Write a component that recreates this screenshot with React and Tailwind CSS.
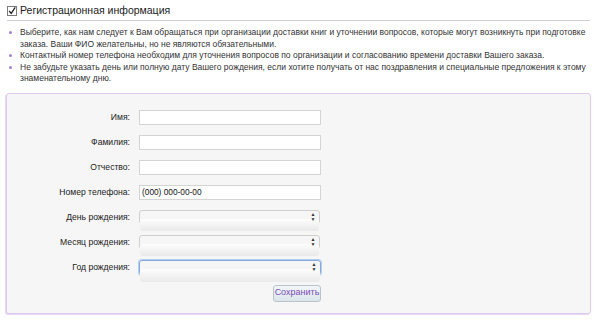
import { useState } from "react";

const notes = [
    "Выберите, как нам следует к Вам обращаться при организации доставки книг и уточнении вопросов, которые могут возникнуть при подготовке заказа. Ваши ФИО желательны, но не являются обязательными.",
    "Контактный номер телефона необходим для уточнения вопросов по организации и согласованию времени доставки Вашего заказа.",
    "Не забудьте указать день или полную дату Вашего рождения, если хотите получать от нас поздравления и специальные предложения к этому знаменательному дню.",
];

function TextField({ label, value }) {
    return (
        <>
            <label className="text-right text-[8.6px] text-[#222] leading-[15px]">{label}</label>
            <input
                className="h-[15px] w-[182px] border border-[#d4d4d4] bg-white px-[2px] text-[8.3px] text-[#111] outline-none"
                defaultValue={value}
            />
        </>
    );
}

function SelectField({ label, focused }) {
    return (
        <>
            <label className="text-right text-[8.6px] text-[#222] leading-[15px]">{label}</label>
            <div
                className={
                    focused
                        ? "relative h-[15px] w-[182px] rounded-[3px] border border-[#86a9de] shadow-[0_0_0_1px_#b3cdf0]"
                        : "relative h-[14px] w-[181px] rounded-[3px] border border-[#cfcfcf]"
                }
            >
                <select className="h-full w-full appearance-none rounded-[3px] bg-gradient-to-b from-[#fdfdfd] to-[#e9e9e9] text-[9px] outline-none">
                    <option></option>
                </select>
                <div className="pointer-events-none absolute right-[1px] top-0 flex h-full w-[10px] flex-col items-center justify-center text-[5px] leading-[5px] text-[#333]">
                    <span>▲</span>
                    <span>▼</span>
                </div>
            </div>
        </>
    );
}

export default function App() {
    const [checked, setChecked] = useState(true);

    return (
        <div className="h-[324px] w-[600px] overflow-hidden bg-white font-['Liberation_Sans',Arial,sans-serif]">
            <div className="flex h-[20px] items-center gap-[3px] pl-[7px] pt-[2px]">
                <button
                    onClick={() => setChecked(!checked)}
                    className="flex h-[10px] w-[10px] items-center justify-center border border-[#7a7a7a] bg-white"
                >
                    {checked && (
                        <svg viewBox="0 0 10 10" className="h-[10px] w-[10px]">
                            <path d="M1.5 5 L4 8 L9 0.5" fill="none" stroke="#222" strokeWidth="1.6" />
                        </svg>
                    )}
                </button>
                <h2 className="text-[10.5px] text-[#222]">Регистрационная информация</h2>
            </div>
            <div className="ml-[7px] h-px w-[583px] bg-[#cfcfcf]" />

            <ul className="mt-[6px] flex flex-col pl-[20px] pr-[8px] text-[8.5px] leading-[11.5px] text-[#333]">
                {notes.map((note) => (
                    <li key={note} className="relative">
                        <span className="absolute left-[-11px] top-[4px] h-[3px] w-[3px] rounded-full bg-[#a57fd0]" />
                        {note}
                    </li>
                ))}
            </ul>

            <div className="ml-[6px] mt-[8px] h-[221px] w-[585px] rounded-[3px] border border-[#dccbee] bg-[#f6f6f6] shadow-[-1px_1px_0_#e6d7f4]">
                <form className="grid grid-cols-[123px_182px] items-center gap-x-[9px] gap-y-[10px] pt-[16px]">
                    <TextField label="Имя:" />
                    <TextField label="Фамилия:" />
                    <TextField label="Отчество:" />
                    <TextField label="Номер телефона:" value="(000) 000-00-00" />
                    <SelectField label="День рождения:" />
                    <SelectField label="Месяц рождения:" />
                    <SelectField label="Год рождения:" focused />
                    <div />
                    <div className="flex justify-end">
                        <button
                            type="button"
                            className="h-[17px] w-[48px] rounded-[3px] border border-[#b9c3c9] bg-gradient-to-b from-[#f1f6f8] to-[#dbe5ea] text-[9px] text-[#7b4db8]"
                        >
                            Сохранить
                        </button>
                    </div>
                </form>
            </div>
        </div>
    );
}
